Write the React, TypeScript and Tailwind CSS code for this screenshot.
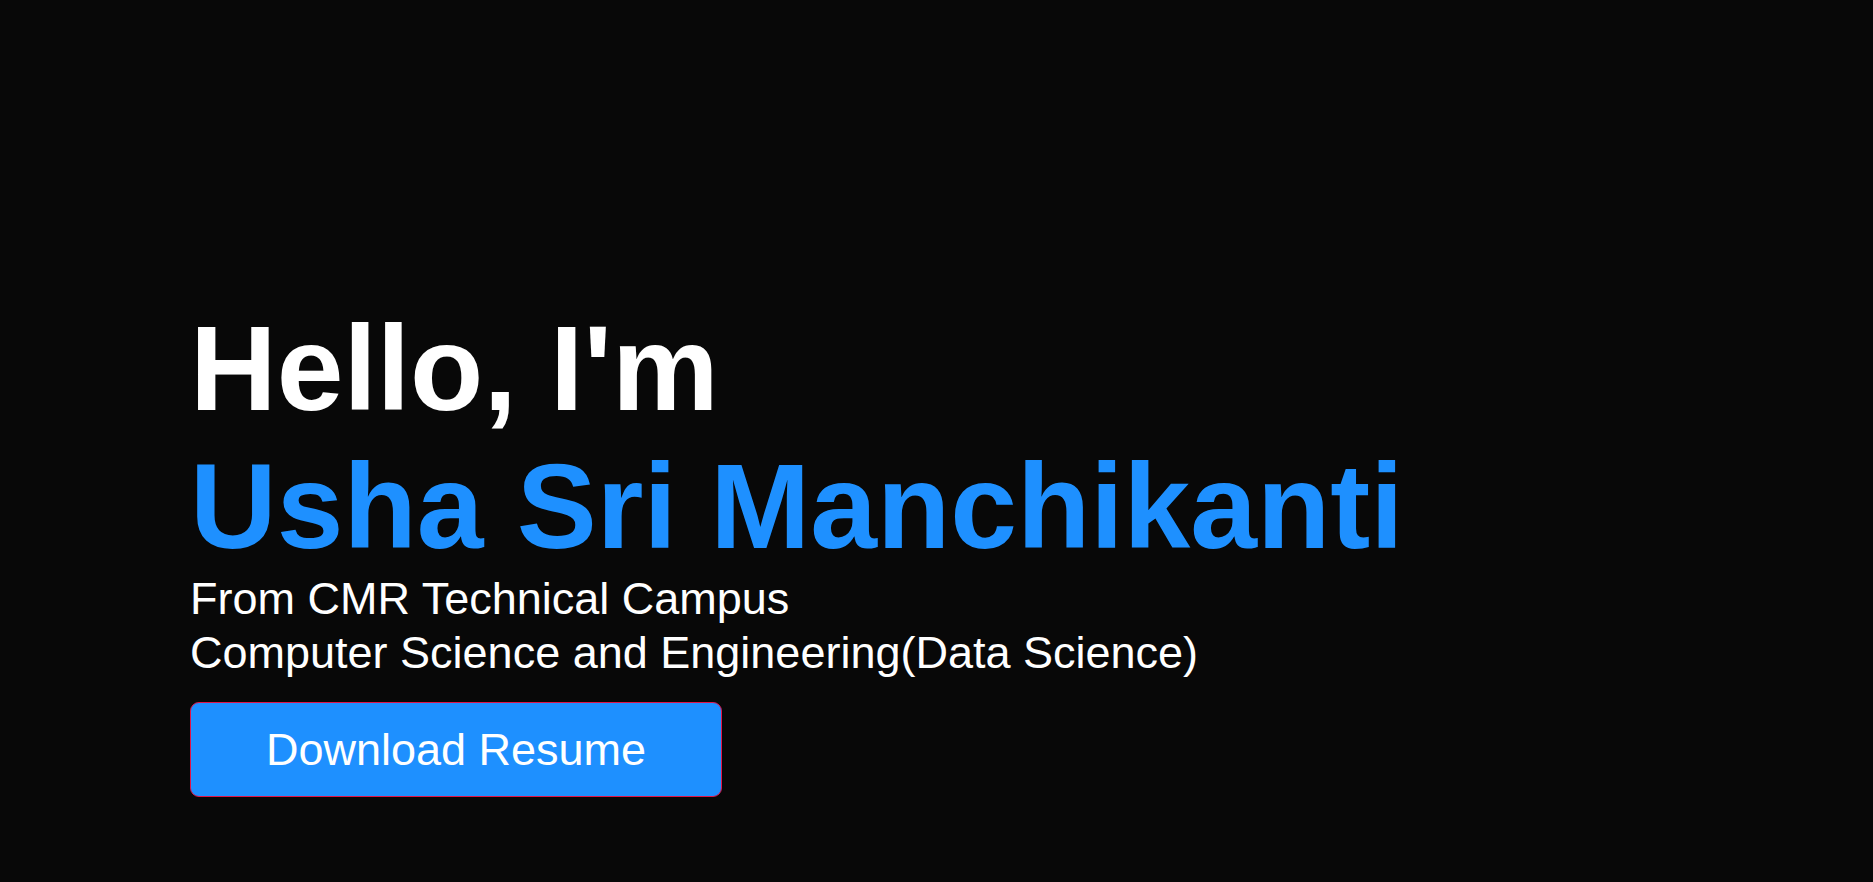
export default function App() {
  return (
    <div
      className="min-h-screen w-full bg-[#080808] text-white pt-[299px] pl-[190px]"
      style={{ fontFamily: '"Liberation Sans", Arial, sans-serif' }}
    >
      {/* Hero */}
      <section className="flex flex-col items-start">
        <h1 className="text-[120px] font-bold leading-[138px]">Hello, I'm</h1>
        <h1 className="text-[120px] font-bold leading-[138px] text-[#1e90ff]">Usha Sri Manchikanti</h1>
        <div className="-mt-[3px] text-[45px] leading-[54px]">
          <p>From CMR Technical Campus</p>
          <p>Computer Science and Engineering(Data Science)</p>
        </div>
        <button className="mt-[22px] w-[532px] h-[95px] rounded-[9px] border border-[#e0144a] bg-[#1e90ff] text-[45px] text-white">
          Download Resume
        </button>
      </section>
    </div>
  )
}
